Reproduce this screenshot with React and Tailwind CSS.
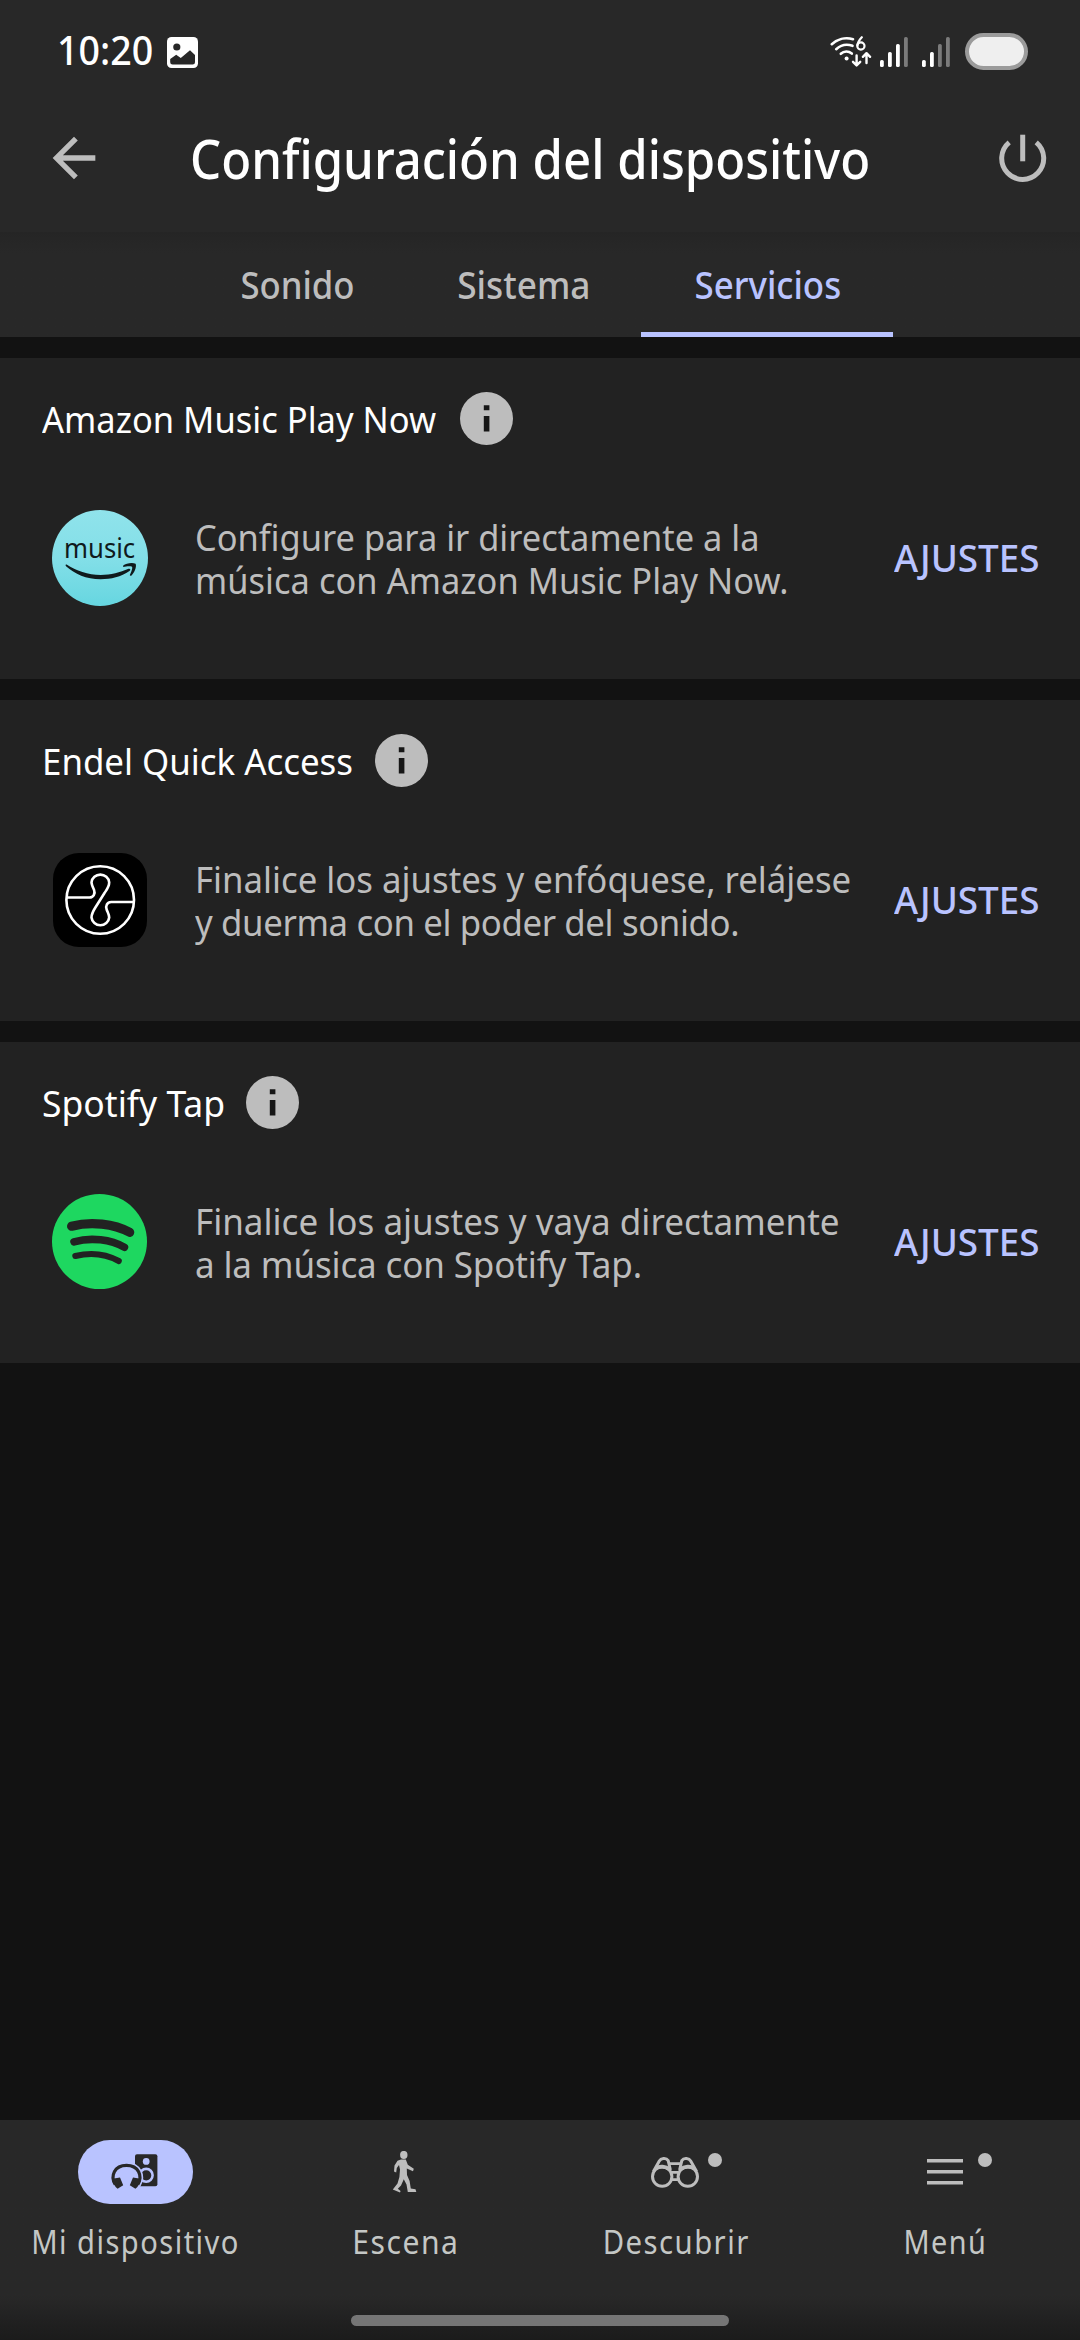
import React, { useState } from "react";
import { MdArrowBack } from "react-icons/md";
import clsx from "clsx";

const PhotoIcon = () => (
    <svg width="31" height="31" viewBox="0 0 31 31">
        <rect width="31" height="31" rx="4.5" fill="#fff" />
        <circle cx="9.8" cy="10" r="3.6" fill="#282828" />
        <path d="M3.2 22L9.2 17.8L13.8 21L23 13.2L28 18V25.2Q28 27.6 25.6 27.6H5.6Q3.2 27.6 3.2 25.2Z" fill="#282828" />
    </svg>
);

const WifiIcon = () => (
    <svg width="42" height="32" viewBox="0 0 42 32" fill="none" stroke="#fff" strokeLinecap="round" strokeLinejoin="round">
        <path d="M1.8 8.2C7 3.4 15 .8 23 3.2" strokeWidth="2.6" />
        <path d="M6.2 13.2C10.5 9.2 16.5 7.6 22.5 9.8" strokeWidth="2.6" />
        <path d="M10.8 17.8C14 14.8 18.6 14.8 21.8 17.6" strokeWidth="2.6" />
        <circle cx="16.6" cy="22.6" r="2" fill="#fff" stroke="none" />
        <path d="M31.8 1.2C29.6 3.6 27.4 6.6 27.4 9.6" strokeWidth="2.2" />
        <circle cx="30.9" cy="10" r="3.6" strokeWidth="2.2" />
        <path d="M26.6 19.5V29M23 25.8L26.6 29.4L30.2 25.8" strokeWidth="2.4" />
        <path d="M36.5 27V17.5M32.9 20.8L36.5 17.2L40.1 20.8" strokeWidth="2.4" />
    </svg>
);

const SignalIcon = ({ level }) => (
    <svg width="28" height="30" viewBox="0 0 28 30">
        {[[0, 23], [8, 15], [16, 7], [24, 0]].map(([x, y], i) => (
            <rect key={x} x={x} y={y} width="3.8" height={30 - y} rx="1.6" fill={i < level ? "#fff" : "#7b7b7b"} />
        ))}
    </svg>
);

const PowerIcon = () => (
    <svg width="48" height="48" viewBox="0 0 48 48" fill="none" stroke="#bdbdbd" strokeWidth="5">
        <path d="M10.2 8.3A21 21 0 1 0 37.2 8.3" />
        <path d="M23.7 .7V27.3" />
    </svg>
);

const InfoIcon = () => (
    <svg width="53" height="53" viewBox="0 0 53 53">
        <circle cx="26.5" cy="26.5" r="26.5" fill="#bdbdbd" />
        <path d="M23.8 13.3h5.6v5h-5.6zM23.8 24h5.6v15.6h-5.6z" fill="#161616" />
    </svg>
);

const AmazonMusicLogo = () => (
    <div className="w-24 h-24 rounded-full bg-linear-to-b from-[#90e3eb] via-[#83dfe8] to-[#66d6e0] relative">
        <span className="absolute left-3 top-[21px] text-[28px] leading-8 text-[#0f1a1c] origin-left scale-x-[0.917]">music</span>
        <svg className="absolute inset-0" width="96" height="96" viewBox="0 0 96 96" fill="#0f1a1c">
            <path d="M14.6 54.6C24 61 36 65 48.7 65C59 65 68 62.5 76.5 58.8C78.4 58.2 79 60 77.5 61C69 66.8 59 69.2 48.7 69.2C34 69.2 23 64 14 56.2C13.2 55 13.6 54 14.6 54.6Z" />
            <path d="M71 55.8C74 53.2 80.5 52.2 83.6 53.8C85 57 82.2 63.2 79 66L77.8 65.2C79.5 61.5 80.8 58 80 56.8C78.5 55.8 74 56.4 71.3 56.9Z" />
        </svg>
    </div>
);

const EndelLogo = () => (
    <svg width="96" height="96" viewBox="-1 -1 96 96" fill="none" stroke="#fff" strokeWidth="2.6">
        <rect width="94" height="94" rx="26" fill="#000" stroke="none" />
        <circle cx="47.2" cy="47" r="33.8" />
        <path d="M13.5 44.5H36.5C40.5 44.5 42.5 40.5 41 36.8C39.5 33.5 38.5 31.5 38.5 29.3A8.9 8.6 0 0 1 56.2 29.3C56.2 34 53.5 37 51.5 40L43 53.5C40.5 57.5 38.5 60.5 38.5 64.5A8.9 8.6 0 0 0 56.2 64.5C56.2 62 55 60 53.7 56.8C52.2 53 54.2 49 58.2 49H80.5" />
    </svg>
);

const SpotifyLogo = () => (
    <svg width="96" height="96" viewBox="0 0 96 96" fill="none" stroke="#222" strokeLinecap="round">
        <circle cx="47.5" cy="47.5" r="47.5" fill="#1ed760" stroke="none" />
        <path d="M19.6 32.2C39 27 62 29.8 77.7 38.3" strokeWidth="9.2" />
        <path d="M22 47.8C39 43 59 45.5 72.4 53.3" strokeWidth="7.6" />
        <path d="M23.3 62C38 58.4 54 60 66.8 67" strokeWidth="6" />
    </svg>
);

const DevicesIcon = () => (
    <svg width="115" height="64" viewBox="0 0 115 64">
        <rect x="57" y="14.2" width="22.4" height="32" rx="2" fill="#282828" />
        <circle cx="68.2" cy="21.4" r="3.4" fill="#b9c3ff" />
        <circle cx="68.2" cy="35.3" r="6.4" fill="none" stroke="#b9c3ff" strokeWidth="2.6" />
        <path d="M37.2 44.5C32 36 36.5 25.4 48.5 25.4S65 36 59.8 44.5L57 49" fill="#b9c3ff" stroke="#b9c3ff" strokeWidth="6.4" />
        <g fill="#282828">
            <path d="M37.2 44.5C32 36 36.5 25.4 48.5 25.4S65 36 59.8 44.5" fill="none" stroke="#282828" strokeWidth="3.2" />
            <path d="M36 38.5L42 37.6L45.2 45.2L39.6 48.8C37.2 47 35 43.5 34.6 40Z" />
            <path d="M61 38.5L55 37.6L51.8 45.2L57.4 48.8C59.8 47 62 43.5 62.4 40Z" />
        </g>
    </svg>
);

const WalkIcon = () => (
    <svg width="26" height="42" viewBox="0 0 26 42" fill="#bdbdbd">
        <ellipse cx="11.8" cy="4" rx="3.7" ry="4.1" />
        <path d="M9 8.4H13.8L15.8 13.8L21.8 17.8L21 20.2L14.8 17.6L15 24L17.6 30L18.8 37.6L23.5 38.2L24.3 41H15.8L14.5 33.4L11.8 28.2L9 34.5L5.8 37.8L8.6 40L8 41.6L.8 38.5L5.5 32.5L7.4 26L8 18.5L7 14L4.8 17L4.2 21.5L2 20.5L2.5 14.5L5.5 9.8Z" />
    </svg>
);

const BinocularsIcon = () => (
    <svg width="50" height="33" viewBox="0 0 50 33" fill="none" stroke="#bdbdbd" strokeWidth="3">
        <circle cx="12.2" cy="20.6" r="9.7" />
        <circle cx="37.8" cy="20.6" r="9.7" />
        <path d="M3.4 15.5L9.3 5C10.8 2.2 16 1.2 18.2 4.6L20.4 14" />
        <path d="M46.6 15.5L40.7 5C39.2 2.2 34 1.2 31.8 4.6L29.6 14" />
        <path d="M6 12C9.5 10 15.5 10 19.5 13.4M44 12C40.5 10 34.5 10 30.5 13.4" strokeWidth="3.8" />
        <path d="M19 7.6H31M22 16.4H28M22 23.6H28" strokeWidth="2.6" />
    </svg>
);

const MenuIcon = () => (
    <svg width="36" height="26" viewBox="0 0 36 26" fill="#bdbdbd">
        <path d="M0 0h36v3.6H0zM0 11h36v3.6H0zM0 22h36v3.6H0z" />
    </svg>
);

const tabs = [
    { id: "sonido", label: "Sonido", width: "w-[218px]", scale: "scale-x-[0.913]" },
    { id: "sistema", label: "Sistema", width: "w-[236px]", scale: "scale-x-[0.928]" },
    { id: "servicios", label: "Servicios", width: "w-[252px]", scale: "scale-x-[0.918]" },
];

const services = [
    {
        name: "Amazon Music Play Now",
        nameWidth: "w-[417px]",
        nameScale: "scale-x-[0.933]",
        logo: <AmazonMusicLogo />,
        lines: ["Configure para ir directamente a la", "música con Amazon Music Play Now."],
        textScale: "scale-x-[0.956]",
        lastLine: "tracking-[0.05px]",
    },
    {
        name: "Endel Quick Access",
        nameWidth: "w-[332px]",
        nameScale: "scale-x-[0.942]",
        logo: <EndelLogo />,
        lines: ["Finalice los ajustes y enfóquese, relájese", "y duerma con el poder del sonido."],
        textScale: "scale-x-[0.966]",
        lastLine: "tracking-[-0.38px]",
    },
    {
        name: "Spotify Tap",
        nameWidth: "w-[203px]",
        nameScale: "scale-x-[0.96]",
        logo: <SpotifyLogo />,
        lines: ["Finalice los ajustes y vaya directamente", "a la música con Spotify Tap."],
        textScale: "scale-x-[0.973]",
        lastLine: "tracking-[-0.15px]",
    },
];

const navItems = [
    { label: "Mi dispositivo", icon: <DevicesIcon />, active: true, scale: "scale-x-[0.91]" },
    { label: "Escena", icon: <WalkIcon />, scale: "scale-x-[0.94]" },
    { label: "Descubrir", icon: <BinocularsIcon />, badge: true, scale: "scale-x-[0.915]" },
    { label: "Menú", icon: <MenuIcon />, badge: true, scale: "scale-x-[0.9]" },
];

const StatusBar = () => (
    <div className="h-[100px] flex items-center justify-between pl-[57px] pr-[52px]">
        <div className="flex items-center">
            <div className="w-[110px]">
                <span className="block w-max text-[40px] leading-10 font-medium text-white origin-left scale-x-[0.939]">10:20</span>
            </div>
            <div className="mt-[5px]"><PhotoIcon /></div>
        </div>
        <div className="flex items-center">
            <div className="mt-1"><WifiIcon /></div>
            <div className="ml-2 mt-[3px]"><SignalIcon level={3} /></div>
            <div className="ml-3.5 mt-[3px]"><SignalIcon level={2} /></div>
            <div className="ml-[15px] mt-[3px] w-[63px] h-[37px] rounded-full border-4 border-[#9b9b9b] bg-[#efefef]"></div>
        </div>
    </div>
);

const ServiceCard = ({ service }) => (
    <section className="h-[321px] bg-[#222222]">
        <div className="h-[121px] pl-[42px] flex items-center">
            <div className={service.nameWidth}>
                <h2 className={clsx("w-max text-[37px] leading-[43px] text-white origin-left", service.nameScale)}>{service.name}</h2>
            </div>
            <button className="ml-px"><InfoIcon /></button>
        </div>
        <div className="h-[158px] pl-[52px] flex items-center">
            {service.logo}
            <div className="flex-1 ml-[47px] pt-0.5">
                <p className={clsx("w-max text-[36px] leading-[43px] text-[#bdbdbd] origin-left", service.textScale)}>
                    {service.lines[0]}
                    <br />
                    <span className={service.lastLine}>{service.lines[1]}</span>
                </p>
            </div>
            <button className="w-[186px] pb-px text-left text-[38px] leading-[43px] font-medium text-[#b9c3ff]">
                <span className="inline-block origin-left scale-x-[0.969]">AJUSTES</span>
            </button>
        </div>
    </section>
);

const App = () => {
    const [activeTab, setActiveTab] = useState("servicios");

    return (
        <div className="w-[1080px] h-[2340px] flex flex-col overflow-hidden bg-[#121212] font-['Noto_Sans',sans-serif] whitespace-nowrap">
            {/* Header */}
            <header className="bg-[#282828]">
                <StatusBar />
                <div className="h-[132px] pb-4 pl-[42px] pr-[33px] flex items-center">
                    <button className="w-[148px]">
                        <MdArrowBack size={64} color="#bdbdbd" />
                    </button>
                    <div className="flex-1">
                        <h1 className="w-max text-[54px] leading-[64px] font-medium text-white origin-left scale-x-[0.909]">Configuración del dispositivo</h1>
                    </div>
                    <button><PowerIcon /></button>
                </div>
            </header>

            {/* Tabs */}
            <div className="h-[105px] flex justify-center bg-linear-to-b from-[#252525] to-[#282828] to-20%">
                {tabs.map((tab) => (
                    <button
                        key={tab.id}
                        onClick={() => setActiveTab(tab.id)}
                        className={clsx(
                            "pt-[5px] pl-0.5 border-b-[5px] text-[38px] font-medium",
                            tab.width,
                            activeTab === tab.id ? "border-[#b9c3ff] text-[#b9c3ff]" : "border-transparent text-[#bdbdbd]"
                        )}
                    >
                        <span className={clsx("inline-block", tab.scale)}>{tab.label}</span>
                    </button>
                ))}
            </div>

            {/* Services */}
            <main className="flex-1 pt-[21px] flex flex-col gap-[21px]">
                {services.map((service) => (
                    <ServiceCard key={service.name} service={service} />
                ))}
            </main>

            {/* Bottom navigation */}
            <nav className="h-[220px] pt-5 bg-linear-to-b from-[#282828] from-80% to-[#1b1b1b]">
                <div className="grid grid-cols-4">
                    {navItems.map((item) => (
                        <button key={item.label} className="flex flex-col items-center">
                            <div className={clsx("relative w-[115px] h-16 rounded-full flex items-center justify-center", item.active && "bg-[#b9c3ff]")}>
                                {item.icon}
                                {item.badge && <span className="absolute right-[11px] top-[13px] w-3.5 h-3.5 rounded-full bg-[#bdbdbd]"></span>}
                            </div>
                            <span className={clsx("mt-[18px] pl-0.5 text-[32px] leading-10 tracking-[1.6px] text-[#c4c7c5]", item.scale)}>{item.label}</span>
                        </button>
                    ))}
                </div>
                <div className="mt-[53px] mx-auto w-[378px] h-[11px] rounded-full bg-[#757575]"></div>
            </nav>
        </div>
    );
};

export default App;
